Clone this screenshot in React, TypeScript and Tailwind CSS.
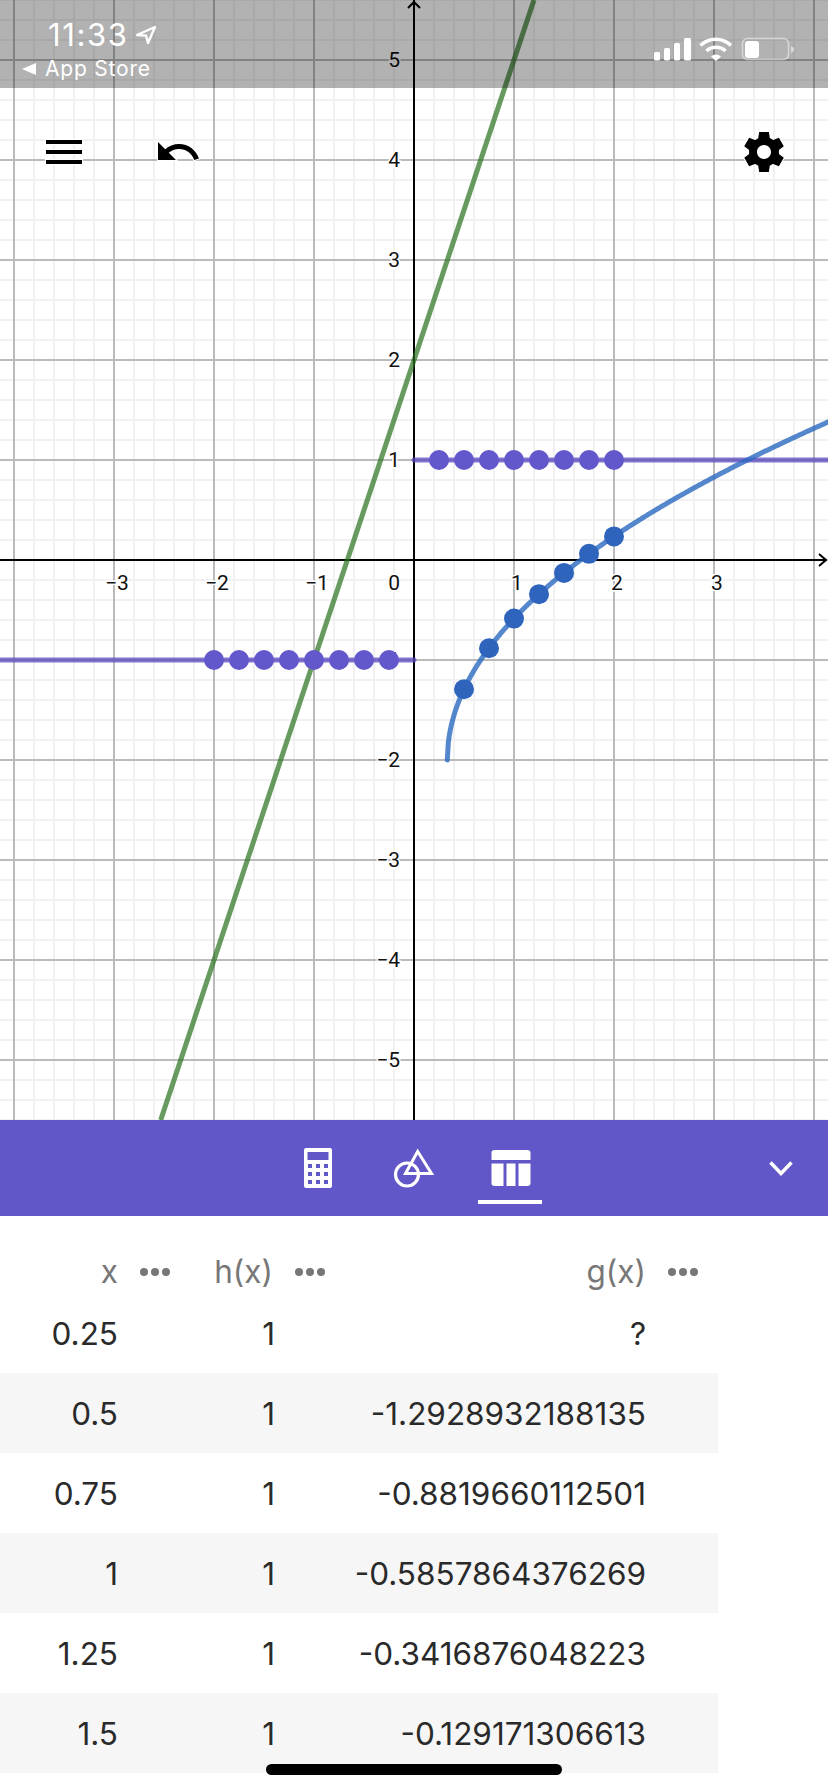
import React from 'react';

const gx = (v: number) => 414 + v * 100;
const gy = (v: number) => 560 - v * 100;
const g = (x: number) => Math.sqrt(3 * x - 1) - 2;

const curvePoints: string[] = [];
for (let x = 1 / 3; x <= 4.2; x += 0.01) {
    curvePoints.push(`${gx(x).toFixed(1)},${gy(g(x)).toFixed(1)}`);
}

const minorX = Array.from({ length: 42 }, (_, i) => 14 + i * 20);
const minorY = Array.from({ length: 57 }, (_, i) => i * 20);
const majorX = [-4, -3, -2, -1, 1, 2, 3, 4];
const majorY = [5, 4, 3, 2, 1, -1, -2, -3, -4, -5];

const rows = [
    { x: '0.25', h: '1', g: '?' },
    { x: '0.5', h: '1', g: '-1.2928932188135' },
    { x: '0.75', h: '1', g: '-0.8819660112501' },
    { x: '1', h: '1', g: '-0.5857864376269' },
    { x: '1.25', h: '1', g: '-0.3416876048223' },
    { x: '1.5', h: '1', g: '-0.129171306613' },
];

function Graph() {
    const label = { fontFamily: 'Roboto, sans-serif', fontSize: 21, fill: '#111', stroke: '#fff', strokeWidth: 3, paintOrder: 'stroke' } as const;
    return (
        <svg width="828" height="1120" viewBox="0 0 828 1120" className="block">
            <rect width="828" height="1120" fill="#fff" />
            {minorX.map((x) => <line key={x} x1={x} x2={x} y1={0} y2={1120} stroke="#f1f1f1" strokeWidth="2" />)}
            {minorY.map((y) => <line key={y} x1={0} x2={828} y1={y} y2={y} stroke="#f1f1f1" strokeWidth="2" />)}
            {majorX.map((v) => <line key={v} x1={gx(v)} x2={gx(v)} y1={0} y2={1120} stroke="#bbbbbb" strokeWidth="2" />)}
            {majorY.map((v) => <line key={v} x1={0} x2={828} y1={gy(v)} y2={gy(v)} stroke="#bbbbbb" strokeWidth="2" />)}

            <line x1={414} x2={414} y1={0} y2={1120} stroke="#000" strokeWidth="2" />
            <line x1={0} x2={827} y1={560} y2={560} stroke="#000" strokeWidth="2" />
            <path d="M408 8 L414 2 L420 8" fill="none" stroke="#000" strokeWidth="2" />
            <path d="M819 554 L826 560 L819 566" fill="none" stroke="#000" strokeWidth="2" />

            {[-3, -2, -1, 1, 2, 3].map((v) => (
                <text key={v} x={gx(v) + 3} y={590} textAnchor="middle" style={label}>
                    {v < 0 ? `\u2212${-v}` : v}
                </text>
            ))}
            <text x={400} y={590} textAnchor="end" style={label}>0</text>
            {majorY.map((v) => (
                <text key={v} x={400} y={gy(v) + 7} textAnchor="end" style={label}>
                    {v < 0 ? `\u2212${-v}` : v}
                </text>
            ))}

            <line x1={gx(-2.533)} y1={1120} x2={gx(1.2)} y2={0} stroke="#28711c" strokeOpacity="0.7" strokeWidth="5" />
            <line x1={0} x2={414} y1={660} y2={660} stroke="#5a48c0" strokeOpacity="0.75" strokeWidth="5" strokeLinecap="round" />
            <line x1={414} x2={828} y1={460} y2={460} stroke="#5a48c0" strokeOpacity="0.75" strokeWidth="5" strokeLinecap="round" />
            <polyline points={curvePoints.join(' ')} fill="none" stroke="#2a69c0" strokeOpacity="0.8" strokeWidth="5" strokeLinecap="round" />

            {[0.25, 0.5, 0.75, 1, 1.25, 1.5, 1.75, 2].map((x) => (
                <circle key={x} cx={gx(x)} cy={gy(1)} r="10" fill="#6257cb" />
            ))}
            {[-2, -1.75, -1.5, -1.25, -1, -0.75, -0.5, -0.25].map((x) => (
                <circle key={x} cx={gx(x)} cy={gy(-1)} r="10" fill="#6257cb" />
            ))}
            {[0.5, 0.75, 1, 1.25, 1.5, 1.75, 2].map((x) => (
                <circle key={x} cx={gx(x)} cy={gy(g(x))} r="10" fill="#2f64bd" />
            ))}
        </svg>
    );
}

function MaterialIcon({ d }: { d: string }) {
    return (
        <svg width="48" height="48" viewBox="0 0 24 24" className="block">
            <path d={d} fill="#000" stroke="#fff" strokeWidth="1" paintOrder="stroke" />
        </svg>
    );
}

function StatusBar() {
    return (
        <div className="absolute inset-x-0 top-0 h-[88px] bg-black/30 text-white">
            <div className="absolute left-[48px] top-[15px] flex items-center gap-[7px]">
                <span className="font-['Inter',sans-serif] text-[31px] leading-[40px] tracking-[1.6px]">11:33</span>
                <svg width="22" height="20" viewBox="0 0 22 20" fill="none" stroke="#fff" strokeWidth="2.4" strokeLinejoin="round">
                    <path d="M20 2 L2 10 L11 10.5 L13 18 Z" />
                </svg>
            </div>
            <div className="absolute left-[22px] top-[56px] flex items-center gap-[9px]">
                <svg width="14" height="12" viewBox="0 0 14 12"><path d="M14 0 V12 L0 6 Z" fill="#fff" /></svg>
                <span className="font-['Inter',sans-serif] text-[21px] leading-[26px] tracking-[0.8px]">App Store</span>
            </div>
            <svg className="absolute left-[651px] top-[34px]" width="148" height="30" viewBox="650 34 148 30">
                <rect x="653" y="52" width="6" height="8.5" rx="1.5" fill="#fff" />
                <rect x="663" y="48" width="6" height="12.5" rx="1.5" fill="#fff" />
                <rect x="673" y="43" width="6" height="17.5" rx="1.5" fill="#fff" />
                <rect x="683" y="38" width="7" height="22.5" rx="1.5" fill="#fff" />
                <path d="M699.5 45.5 A22 22 0 0 1 730 45.5" fill="none" stroke="#fff" strokeWidth="3.5" />
                <path d="M705.5 51 A14 14 0 0 1 724.5 51" fill="none" stroke="#fff" strokeWidth="3.5" />
                <path d="M710 56.5 L715 61 L720 56.5 A8 8 0 0 0 710 56.5 Z" fill="#fff" />
                <rect x="741.5" y="38.5" width="46" height="21" rx="5" fill="none" stroke="#fff" strokeOpacity="0.5" strokeWidth="1.5" />
                <rect x="744" y="41" width="14" height="17" rx="3" fill="#fff" />
                <path d="M790 46 L793 48 V51 L790 53 Z" fill="#fff" fillOpacity="0.5" />
            </svg>
        </div>
    );
}

function TabIcons() {
    return (
        <svg width="260" height="75" viewBox="290 1135 260 75" className="ml-[12px] block">
            {/* calculator */}
            <path
                fillRule="evenodd"
                fill="#fff"
                d="M306 1148 h24 a2 2 0 0 1 2 2 v36 a2 2 0 0 1 -2 2 h-24 a2 2 0 0 1 -2 -2 v-36 a2 2 0 0 1 2 -2 Z
                   M307.5 1152 v8 h21 v-8 Z
                   M308 1164 v4 h4 v-4 Z M316 1164 v4 h4 v-4 Z M324 1164 v4 h4 v-4 Z
                   M308 1172 v4 h4 v-4 Z M316 1172 v4 h4 v-4 Z M324 1172 v4 h4 v-4 Z
                   M308 1180 v4 h4 v-4 Z M316 1180 v4 h4 v-4 Z M324 1180 v4 h4 v-4 Z"
            />
            {/* geometry */}
            <circle cx="407" cy="1174.5" r="11.5" fill="none" stroke="#fff" strokeWidth="3.2" />
            <path d="M417.7 1151.5 L431.5 1173.5 L405.5 1173.5 Z" fill="none" stroke="#fff" strokeWidth="3" />
            {/* table */}
            <path d="M494.5 1150 h33 a3 3 0 0 1 3 3 v7 h-39 v-7 a3 3 0 0 1 3 -3 Z" fill="#fff" />
            <path d="M491.5 1163.5 h12 v22.5 h-9 a3 3 0 0 1 -3 -3 Z" fill="#fff" />
            <rect x="506.5" y="1163.5" width="9" height="22.5" fill="#fff" />
            <path d="M518.5 1163.5 h12 v19.5 a3 3 0 0 1 -3 3 h-9 Z" fill="#fff" />
            <rect x="478" y="1200" width="64" height="4" fill="#fff" />
        </svg>
    );
}

function Dots() {
    return (
        <span className="flex gap-[3px]">
            <span className="size-[8px] rounded-full bg-[#777]" />
            <span className="size-[8px] rounded-full bg-[#777]" />
            <span className="size-[8px] rounded-full bg-[#777]" />
        </span>
    );
}

function HeaderCell({ name }: { name: string }) {
    return (
        <div className="relative pr-[72px] text-right">
            <span>{name}</span>
            <span className="absolute right-[20px] top-1/2 -translate-y-1/2"><Dots /></span>
        </div>
    );
}

export default function App() {
    return (
        <div className="relative flex h-[1792px] w-[828px] flex-col overflow-hidden bg-white font-['Roboto',sans-serif]">
            <div className="relative h-[1120px]">
                <Graph />
                <StatusBar />
                <div className="absolute left-[40px] top-[128px]">
                    <MaterialIcon d="M3 18h18v-2H3v2zm0-5h18v-2H3v2zm0-7v2h18V6H3z" />
                </div>
                <div className="absolute left-[154px] top-[128px]">
                    <MaterialIcon d="M12.5 8c-2.65 0-5.05.99-6.9 2.6L2 7v9h9l-3.62-3.62c1.39-1.16 3.16-1.88 5.12-1.88 3.54 0 6.55 2.31 7.6 5.5l2.37-.78C21.08 11.03 17.15 8 12.5 8z" />
                </div>
                <div className="absolute left-[740px] top-[128px]">
                    <MaterialIcon d="M19.44 12.99l-.01.02c.04-.33.08-.67.08-1.01 0-.34-.03-.66-.07-.99l.01.02 2.44-1.92-2.43-4.22-2.87 1.16.01.01c-.52-.4-1.09-.74-1.71-1h.01L14.44 2H9.57l-.44 3.07h.01c-.62.26-1.19.6-1.71 1l.01-.01-2.88-1.17-2.44 4.22 2.44 1.92.01-.02c-.04.33-.07.65-.07.99 0 .34.03.68.08 1.01l-.01-.02-2.1 1.65-.33.26 2.43 4.2 2.88-1.15-.02-.04c.53.41 1.1.75 1.73 1.01h-.03L9.58 22h4.85s.03-.18.06-.42l.38-2.65h-.01c.62-.26 1.2-.6 1.73-1.01l-.02.04 2.88 1.15 2.43-4.2s-.14-.12-.33-.26l-2.11-1.66zM12 15.5c-1.93 0-3.5-1.57-3.5-3.5s1.57-3.5 3.5-3.5 3.5 1.57 3.5 3.5-1.57 3.5-3.5 3.5z" />
                </div>
            </div>

            {/* tab bar */}
            <div className="relative flex h-[96px] items-start justify-center bg-[#6257c9] pt-[15px]">
                <TabIcons />
                <svg className="absolute left-[769px] top-[41px]" width="24" height="15" viewBox="0 0 24 15" fill="none" stroke="#fff" strokeWidth="3.5">
                    <path d="M1.5 1.5 L12 12.5 L22.5 1.5" />
                </svg>
            </div>

            {/* table */}
            <div className="w-[718px] font-['Inter',sans-serif] text-[31.5px] leading-[40px] text-[#2a2a2a]">
                <div className="grid h-[77px] grid-cols-[190px_155px_373px] items-center pt-[35px] text-[#777]">
                    <HeaderCell name="x" />
                    <HeaderCell name="h(x)" />
                    <HeaderCell name="g(x)" />
                </div>
                {rows.map((row, i) => (
                    <div key={row.x} className={`grid h-[80px] grid-cols-[190px_155px_373px] items-center pt-[2px] text-right ${i % 2 === 1 ? 'bg-[#f6f6f6]' : ''}`}>
                        <div className="pr-[72px]">{row.x}</div>
                        <div className="pr-[70px]">{row.h}</div>
                        <div className="pr-[72px]">{row.g}</div>
                    </div>
                ))}
            </div>

            <div className="absolute left-[266px] top-[1764px] h-[11px] w-[296px] rounded-full bg-black" />
        </div>
    );
}
